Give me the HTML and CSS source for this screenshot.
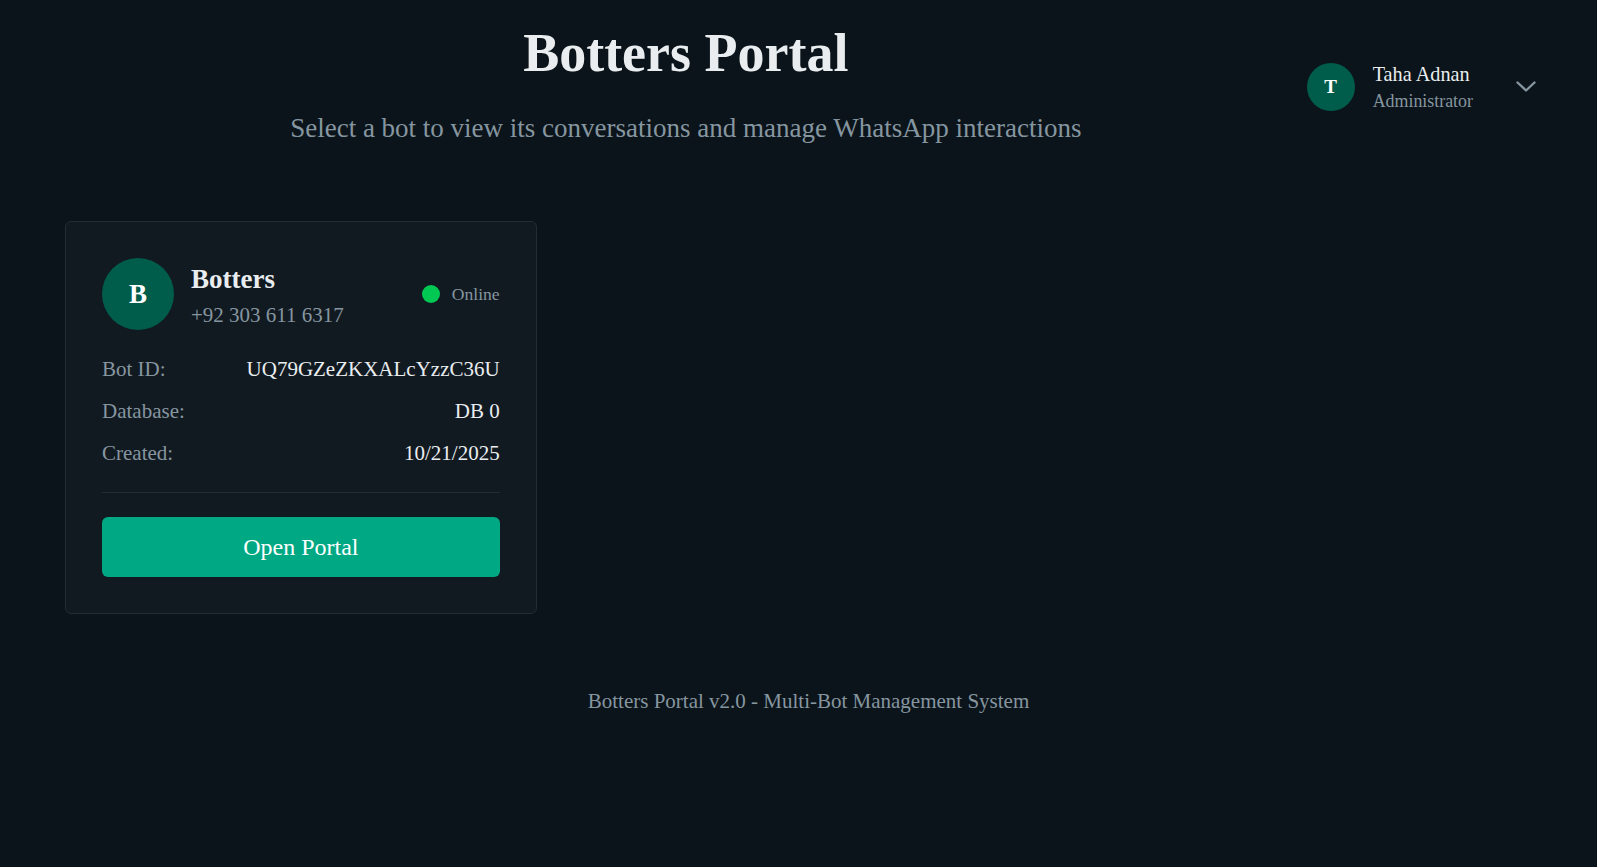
FILE: index.html
```html
<!DOCTYPE html>
<html lang="en">
<head>
	<meta charset="UTF-8">
	<meta name="viewport" content="width=device-width, initial-scale=1.0">
	<title>Botters Portal</title>
	<link rel="stylesheet" href="styles.css">
</head>
<body>
<div class="page">
	<header class="top">
		<div class="intro">
			<h1 class="intro-title">Botters Portal</h1>
			<p class="intro-sub">Select a bot to view its conversations and manage WhatsApp interactions</p>
		</div>
		<div class="user-menu">
			<div class="user-avatar">T</div>
			<div class="user-info">
				<div class="user-name">Taha Adnan</div>
				<div class="user-role">Administrator</div>
			</div>
			<button class="user-toggle" type="button" aria-label="Open menu">
				<svg width="20" height="11" viewBox="0 0 20 11" fill="none" stroke="currentColor" stroke-width="2.4" stroke-linecap="round" stroke-linejoin="round"><polyline points="1.5 1.5 10 9.5 18.5 1.5"/></svg>
			</button>
		</div>
	</header>

	<main class="bots">
		<div class="bot-card">
			<div class="bot-head">
				<div class="bot-avatar">B</div>
				<div class="bot-info">
					<div class="bot-name">Botters</div>
					<div class="bot-phone">+92 303 611 6317</div>
				</div>
				<div class="bot-status"><span class="dot"></span>Online</div>
			</div>
			<div class="bot-details">
				<div class="row"><span class="label">Bot ID:</span><span class="value">UQ79GZeZKXALcYzzC36U</span></div>
				<div class="row"><span class="label">Database:</span><span class="value">DB 0</span></div>
				<div class="row"><span class="label">Created:</span><span class="value">10/21/2025</span></div>
			</div>
			<div class="bot-actions">
				<button class="open-btn" type="button">Open Portal</button>
			</div>
		</div>
	</main>

	<footer class="foot">Botters Portal v2.0 - Multi-Bot Management System</footer>
</div>
</body>
</html>
```

FILE: styles.css
```css
html,body{margin:0;padding:0;}
body{background:#0b141a;color:#e9edef;font-family:"Liberation Serif","Times New Roman",serif;line-height:1.15;}
h1,p{margin:0;}
button{font-family:inherit;border:0;cursor:pointer;}

.page{padding:22px 45px 40px 65px;}

/* header */
.top{display:flex;align-items:flex-start;}
.intro{flex:1;text-align:center;}
.intro-title{font-size:54px;font-weight:bold;color:#e9edef;line-height:1.15;margin-bottom:29px;}
.intro-sub{font-size:27px;color:#8696a0;}

.user-menu{display:flex;align-items:center;margin-top:40px;padding-right:16px;}
.user-avatar{width:48px;height:48px;border-radius:50%;background:#005c4b;color:#fff;font-weight:bold;font-size:19px;display:flex;align-items:center;justify-content:center;}
.user-info{margin-left:18px;}
.user-name{font-size:20.25px;color:#e9edef;padding-top:1px;margin-bottom:5px;}
.user-role{font-size:17.9px;color:#8696a0;}
.user-toggle{background:none;color:#8696a0;padding:0;margin-left:43px;display:flex;}

/* cards */
.bots{display:grid;grid-template-columns:repeat(3,1fr);gap:36px;margin-top:77px;}
.bot-card{background:#121a21;border:1px solid #232c34;border-radius:6px;padding:36px;}
.bot-head{display:flex;align-items:center;margin-bottom:18px;}
.bot-avatar{width:72px;height:72px;border-radius:50%;background:#005c4b;color:#fff;font-size:27px;font-weight:bold;display:flex;align-items:center;justify-content:center;flex-shrink:0;}
.bot-info{flex:1;margin-left:17px;}
.bot-name{font-size:27px;font-weight:bold;color:#e9edef;padding-top:2px;margin-bottom:8px;}
.bot-phone{font-size:21px;color:#8696a0;}
.bot-status{display:flex;align-items:center;font-size:17.6px;color:#8696a0;}
.bot-status .dot{width:18px;height:18px;border-radius:50%;background:#00c853;margin-right:12px;}

.bot-details{margin-bottom:17px;}
.bot-details .row{display:flex;justify-content:space-between;padding:9px 0;font-size:21px;}
.bot-details .label{color:#8696a0;}
.bot-details .value{color:#e9edef;}

.bot-actions{border-top:1px solid #232c34;padding-top:24px;}
.open-btn{display:block;width:100%;background:#00a884;color:#fff;font-size:24px;line-height:28px;padding:16px;border-radius:6px;}

.foot{text-align:center;font-size:21px;color:#8696a0;margin-top:75px;}
```
